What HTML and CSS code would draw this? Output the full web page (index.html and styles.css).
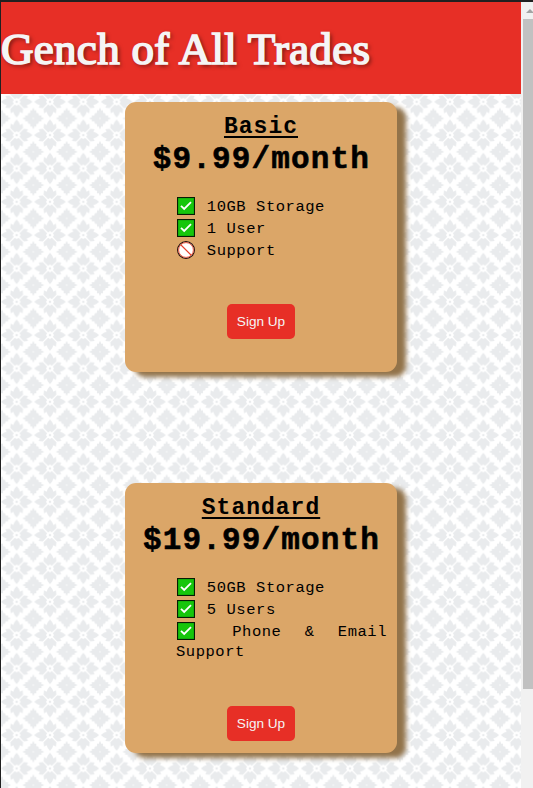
FILE: index.html
```html
<!DOCTYPE html>
<html lang="en">
<head>
<meta charset="utf-8">
<title>Gench of All Trades</title>
<link rel="stylesheet" href="styles.css">
</head>
<body>
<svg class="defs" width="0" height="0" aria-hidden="true">
  <symbol id="check" viewBox="0 0 18 18"><rect x=".5" y=".5" width="17" height="17" fill="#16c60c" stroke="#071c04" stroke-width="1.2"/><path d="M4 8.8 7.2 12 14 5.2" fill="none" stroke="#fff" stroke-width="1.8"/></symbol>
  <symbol id="no" viewBox="0 0 18 18"><circle cx="9" cy="9" r="8.4" fill="#fff" stroke="#210b08" stroke-width="1.1"/><circle cx="9" cy="9" r="7.4" fill="none" stroke="#ee5a43" stroke-width="1"/><path d="m4 4 10 10" stroke="#e6402a" stroke-width="1.1"/></symbol>
</svg>
<div class="window">
  <main class="page">
    <svg class="wallpaper" aria-hidden="true">
      <defs>
        <path id="petal" d="M0-4-1.8-2.8-6.4-7.2-6-11.4-3.4-10-2.2-13 0-15.8 2.2-13 3.4-10 6-11.4 6.4-7.2 1.8-2.8Z"/>
        <g id="flower">
          <use href="#petal"/><use href="#petal" transform="rotate(90)"/><use href="#petal" transform="rotate(180)"/><use href="#petal" transform="rotate(270)"/>
          <circle r="1.3"/>
        </g>
        <g id="diamond">
          <path d="M0-11 1.4-7.8 3-8.4 3-5.6 5.2-5.2 5.6-3 8.4-3 7.8-1.4 11 0 7.8 1.4 8.4 3 5.6 3 5.2 5.2 3 5.6 3 8.4 1.4 7.8 0 11-1.4 7.8-3 8.4-3 5.6-5.2 5.2-5.6 3-8.4 3-7.8 1.4-11 0-7.8-1.4-8.4-3-5.6-3-5.2-5.2-3-5.6-3-8.4-1.4-7.8Z"/>
          <circle r=".7" fill="#fff"/>
        </g>
        <pattern id="floral" width="33.333" height="33.333" patternUnits="userSpaceOnUse" x="-1" y="16.47">
          <g fill="#e9ebed">
            <use href="#flower" x="16.667" y="16.667"/>
            <use href="#diamond"/><use href="#diamond" x="33.333"/><use href="#diamond" y="33.333"/><use href="#diamond" x="33.333" y="33.333"/>
          </g>
        </pattern>
      </defs>
      <rect width="100%" height="100%" fill="url(#floral)"/>
    </svg>
    <header class="banner"><h1>Gench of All Trades</h1></header>
    <section class="plans">
      <article class="card">
        <h2>Basic</h2>
        <p class="price">$9.99/month</p>
        <ul>
          <li><svg class="icon"><use href="#check"/></svg> 10GB Storage</li>
          <li><svg class="icon"><use href="#check"/></svg> 1 User</li>
          <li><svg class="icon"><use href="#no"/></svg> Support</li>
        </ul>
        <button>Sign Up</button>
      </article>
      <article class="card standard">
        <h2>Standard</h2>
        <p class="price">$19.99/month</p>
        <ul>
          <li><svg class="icon"><use href="#check"/></svg> 50GB Storage</li>
          <li><svg class="icon"><use href="#check"/></svg> 5 Users</li>
          <li class="wide"><svg class="icon"><use href="#check"/></svg> Phone &amp; Email Support</li>
        </ul>
        <button>Sign Up</button>
      </article>
    </section>
  </main>
  <aside class="scrollbar"><i class="arrow"></i><i class="thumb"></i></aside>
</div>
</body>
</html>
```
FILE: styles.css
```css
* { box-sizing: border-box; }
body { margin: 0; overflow: hidden; background: #fff; }
.defs { position: absolute; }
.window { display: flex; height: 788px; border-top: 2px solid #202020; border-left: 1px solid #202020; }
.page { position: relative; width: 520px; height: 786px; overflow: hidden; }
.wallpaper { position: absolute; inset: 0; width: 100%; height: 100%; }
.banner { position: relative; height: 92px; background: #e72f26; display: flex; align-items: center; }
h1 { margin: 2px 0 0; font: 400 45px/54px "Liberation Serif", serif; letter-spacing: .3px; color: #f5f5f5; white-space: nowrap; -webkit-text-stroke: 1.7px #f5f5f5; text-shadow: 2px 2px 4px rgba(0,0,0,.6); }
.plans { position: relative; padding-top: 8px; display: flex; flex-direction: column; align-items: center; gap: 111px; }
.card { width: 272px; height: 270px; padding-top: 10px; border-radius: 11px; background: #dba668; box-shadow: 9px 5px 5px #92734a; color: #000; display: flex; flex-direction: column; align-items: center; flex: none; }
h2 { margin: 0; font: 700 23px/30px "Liberation Mono", monospace; letter-spacing: 1px; text-decoration: underline; text-decoration-thickness: 2px; text-underline-offset: 3px; }
.price { margin: 0; padding-left: 1px; font: 700 31px/36px "Liberation Mono", monospace; letter-spacing: 1.15px; -webkit-text-stroke: .6px #000; }
ul { list-style: none; margin: 19px 0 0; padding: 0 10px 0 51px; width: 100%; height: 107px; font: 15.5px/20px "Liberation Mono", monospace; letter-spacing: .54px; text-align: justify; }
li { min-height: 22px; }
.icon { width: 18px; height: 18px; vertical-align: -4px; margin: 0 2px 0 1px; }
.wide .icon { margin-right: 14px; }
button { width: 68px; height: 35px; border: 0; border-radius: 5px; padding: 0; background: #e72f26; color: #f5f5f5; font: 13.6px "Liberation Sans", sans-serif; letter-spacing: 0; }
.standard ul { height: 128px; }
.scrollbar { width: 12px; background: #f1f1f1; padding-left: 2px; overflow: hidden; }
.arrow { display: block; width: 0; height: 4px; margin: 7px 0 6px 3px; border: 4px solid transparent; border-top: 0; border-bottom-color: #a3a3a3; }
.thumb { display: block; height: 670px; background: #c1c1c1; }
```
